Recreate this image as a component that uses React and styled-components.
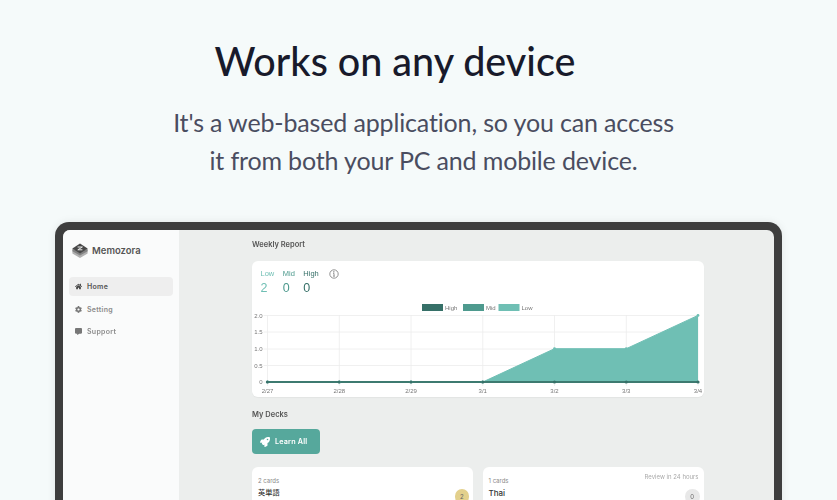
import { createGlobalStyle } from "styled-components";
import styled from "styled-components";
import { FaHome, FaCog, FaCommentAlt, FaRocket } from "react-icons/fa";

const GlobalStyle = createGlobalStyle`
  html, body {
    margin: 0;
    height: 500px;
    overflow: hidden;
    background: #f5fafa;
  }
  * { box-sizing: border-box; }
`;

const days = ["2/27", "2/28", "2/29", "3/1", "3/2", "3/3", "3/4"];
const ticks = [
  { label: "2.0", y: 315.5 },
  { label: "1.5", y: 332 },
  { label: "1.0", y: 349 },
  { label: "0.5", y: 365.5 },
  { label: "0", y: 382 },
];
const left = 15.5;
const step = 71.75;
const xOf = (i) => left + step * i;
const lowValues = [0, 0, 0, 0, 1, 1, 2];

function WeeklyChart() {
  const oy = 261;
  const yOf = (v) => 382 - oy - v * 33.3;
  const line = lowValues.map((v, i) => `${xOf(i)},${yOf(v)}`).join(" ");
  return (
    <ChartSvg viewBox="0 0 452 136" width="452" height="136">
      {ticks.map((t) => (
        <g key={t.label}>
          <line x1={left - 4} x2={xOf(6)} y1={t.y - oy} y2={t.y - oy} stroke="#ececec" strokeWidth="0.8" />
          <text x={left - 5} y={t.y - oy + 2} textAnchor="end" fontSize="6" fill="#777">
            {t.label}
          </text>
        </g>
      ))}
      {days.map((d, i) => (
        <g key={d}>
          <line x1={xOf(i)} x2={xOf(i)} y1={54} y2={125} stroke="#ececec" strokeWidth="0.8" />
          <text x={xOf(i)} y={131.5} textAnchor="middle" fontSize="6" fill="#777">
            {d}
          </text>
        </g>
      ))}

      <polygon points={`${xOf(0)},${yOf(0)} ${line} ${xOf(6)},${yOf(0)}`} fill="#6fbfb4" />
      <polyline points={line} fill="none" stroke="#6fbfb4" strokeWidth="1" />
      <line x1={xOf(0)} x2={xOf(6)} y1={yOf(0)} y2={yOf(0)} stroke="#3d7a70" strokeWidth="1.8" />
      {lowValues.map((v, i) => (
        <g key={i}>
          <circle cx={xOf(i)} cy={yOf(v)} r="1.4" fill="#6fbfb4" />
          <circle cx={xOf(i)} cy={yOf(0)} r="1.6" fill="#367068" />
        </g>
      ))}

      <rect x="170" y="43" width="21" height="7" fill="#367068" />
      <text x="193" y="49" fontSize="6" fill="#777">High</text>
      <rect x="211" y="43" width="21" height="7" fill="#4e9a8e" />
      <text x="234" y="49" fontSize="6" fill="#777">Mid</text>
      <rect x="246.5" y="43" width="21" height="7" fill="#6fbfb4" />
      <text x="269.5" y="49" fontSize="6" fill="#777">Low</text>
    </ChartSvg>
  );
}

function LogoMark() {
  return (
    <svg width="16" height="15" viewBox="0 0 16 15">
      <path d="M8 10.6 0.4 7v3.4L8 15l7.6-4.6V7z" fill="#b0b0b0" />
      <path d="M8 9 0.4 5.6v2.6L8 12.6l7.6-4.4V5.6z" fill="#828282" />
      <path d="M8 0.5 0.4 5.4 8 10.4l7.6-5z" fill="#484848" />
      <path d="M5.6 4h4.8L5.8 6.8h4.6" fill="none" stroke="#e8e8e8" strokeWidth="1" />
    </svg>
  );
}

function InfoMark() {
  return (
    <svg width="10" height="10" viewBox="0 0 10 10" fill="none" stroke="#666" strokeWidth="0.7">
      <circle cx="5" cy="5" r="4.2" />
      <path d="M5 4.4v2.8M4.2 7.2h1.6M4.2 4.4H5" />
      <circle cx="4.9" cy="2.9" r="0.3" fill="#666" />
    </svg>
  );
}

export default function App() {
  return (
    <>
      <GlobalStyle />
      <Page>
        <Heading>Works on any device</Heading>
        <Lead>
          It's a web-based application, so you can access
          <br />
          it from both your PC and mobile device.
        </Lead>

        <Device>
          <Screen>
            <Sidebar>
              <Brand>
                <LogoMark />
                <span>Memozora</span>
              </Brand>
              <NavList>
                <NavItem $active>
                  <FaHome />
                  Home
                </NavItem>
                <NavItem>
                  <FaCog />
                  Setting
                </NavItem>
                <NavItem>
                  <FaCommentAlt />
                  Support
                </NavItem>
              </NavList>
            </Sidebar>

            <Main>
              <SectionTitle>Weekly Report</SectionTitle>
              <ChartCard>
                <Stats>
                  <Stat $color="#6fbfb4">
                    <small>Low</small>
                    <b>2</b>
                  </Stat>
                  <Stat $color="#4e9a8e">
                    <small>Mid</small>
                    <b>0</b>
                  </Stat>
                  <Stat $color="#367068">
                    <small>High</small>
                    <b>0</b>
                  </Stat>
                  <InfoSlot>
                    <InfoMark />
                  </InfoSlot>
                </Stats>
                <WeeklyChart />
              </ChartCard>

              <DecksTitle>My Decks</DecksTitle>
              <LearnButton>
                <FaRocket />
                Learn All
              </LearnButton>

              <DeckGrid>
                <DeckCard>
                  <DeckCount>2 cards</DeckCount>
                  <DeckName $cjk>英単語</DeckName>
                  <DueBadge $due>2</DueBadge>
                </DeckCard>
                <DeckCard>
                  <ReviewNote>Review in 24 hours</ReviewNote>
                  <DeckCount>1 cards</DeckCount>
                  <DeckName>Thai</DeckName>
                  <DueBadge>0</DueBadge>
                </DeckCard>
              </DeckGrid>
            </Main>
          </Screen>
        </Device>
      </Page>
    </>
  );
}

const Page = styled.div`
  display: flex;
  flex-direction: column;
  align-items: center;
  height: 500px;
  overflow: hidden;
  padding-top: 36px;
  font-family: Lato, "Noto Sans", sans-serif;
`;

const Heading = styled.h1`
  margin: 0 47px 0 0;
  font-size: 39.5px;
  line-height: 50px;
  font-weight: 500;
  color: #181a2b;
  white-space: nowrap;
`;

const Lead = styled.p`
  margin: 17px 0 0 10px;
  font-size: 25px;
  line-height: 38px;
  font-weight: 400;
  letter-spacing: -0.15px;
  color: #4a4d60;
  text-align: center;
  white-space: nowrap;
`;

const Device = styled.div`
  width: 727px;
  flex: none;
  margin-top: 43px;
  height: 320px;
  padding: 8px 8px 0;
  background: #3e3e3e;
  border-radius: 14px 14px 0 0;
  box-shadow: 0 0 8px rgba(0, 0, 0, 0.08);
`;

const Screen = styled.div`
  display: flex;
  height: 100%;
  border-radius: 7px 7px 0 0;
  overflow: hidden;
  background: #eceeed;
  font-family: Inter, sans-serif;
  filter: blur(0.25px);
`;

const Sidebar = styled.aside`
  width: 116px;
  flex: none;
  background: #fafbfb;
  padding: 13px 6px;
`;

const Brand = styled.div`
  display: flex;
  align-items: center;
  gap: 4px;
  height: 15px;
  padding-left: 3px;
  font-size: 9.5px;
  font-weight: 600;
  color: #555;
`;

const NavList = styled.nav`
  display: flex;
  flex-direction: column;
  gap: 3.5px;
  margin-top: 19px;
`;

const NavItem = styled.div`
  display: flex;
  align-items: center;
  gap: 5px;
  height: 19px;
  padding-left: 6px;
  border-radius: 4px;
  font-size: 7px;
  font-weight: 600;
  letter-spacing: 0.3px;
  color: ${(props) => (props.$active ? "#555" : "#8a8a8a")};
  background: ${(props) => (props.$active ? "#eeeeee" : "transparent")};

  svg {
    width: 7px;
    height: 7px;
    color: ${(props) => (props.$active ? "#444" : "#777")};
  }
`;

const Main = styled.main`
  flex: 1;
  padding: 9px 70px 0 73px;
`;

const SectionTitle = styled.h2`
  margin: 0;
  height: 12px;
  font-size: 7.5px;
  line-height: 12px;
  font-weight: 600;
  color: #555;
`;

const ChartCard = styled.section`
  position: relative;
  height: 136px;
  margin-top: 10px;
  background: #fff;
  border-radius: 6px;
  box-shadow: 0 1px 1px rgba(0, 0, 0, 0.04);
`;

const ChartSvg = styled.svg`
  position: absolute;
  top: 0;
  left: 0;
  font-family: "Liberation Sans", sans-serif;
`;

const Stats = styled.div`
  display: flex;
  gap: 8.5px;
  padding: 8px 0 0 8.5px;
`;

const Stat = styled.div`
  display: flex;
  flex-direction: column;
  gap: 2px;
  color: ${(props) => props.$color};
  font-family: "Liberation Sans", sans-serif;

  small {
    font-size: 7.5px;
    line-height: 10px;
  }

  b {
    font-size: 12.5px;
    line-height: 15px;
    font-weight: 400;
  }
`;

const InfoSlot = styled.div`
  display: flex;
  margin-left: 1.5px;
  height: 10px;
  position: relative;
  z-index: 1;
`;

const DecksTitle = styled(SectionTitle)`
  margin-top: 12px;
`;

const LearnButton = styled.div`
  display: flex;
  align-items: center;
  gap: 5px;
  width: 68px;
  height: 25px;
  margin-top: 8px;
  padding-left: 8px;
  border-radius: 4px;
  background: #56a89c;
  color: #fff;
  font-size: 7.2px;
  font-weight: 600;
  letter-spacing: 0.2px;

  svg {
    width: 10px;
    height: 10px;
  }
`;

const DeckGrid = styled.div`
  display: grid;
  grid-template-columns: 221px 221px;
  gap: 9.5px;
  margin-top: 13px;
`;

const DeckCard = styled.article`
  position: relative;
  height: 60px;
  padding: 9px 6px;
  background: #fff;
  border-radius: 6px;
`;

const DeckCount = styled.div`
  font-size: 6px;
  line-height: 9px;
  color: #8a8a8a;
`;

const DeckName = styled.div`
  margin-top: 2px;
  font-size: ${(props) => (props.$cjk ? "7.2px" : "8px")};
  line-height: 12px;
  font-weight: 500;
  color: #333;
  font-family: Inter, "Noto Sans CJK JP", sans-serif;
`;

const ReviewNote = styled.div`
  position: absolute;
  top: 5px;
  right: 5px;
  font-size: 6px;
  line-height: 9px;
  color: #aaa;
`;

const DueBadge = styled.div`
  position: absolute;
  top: 22px;
  right: 4px;
  display: grid;
  place-items: center;
  width: 14.5px;
  height: 14.5px;
  border-radius: 50%;
  font-size: 6px;
  color: #666;
  background: ${(props) => (props.$due ? "#e3d08c" : "#e8e8e8")};
`;
